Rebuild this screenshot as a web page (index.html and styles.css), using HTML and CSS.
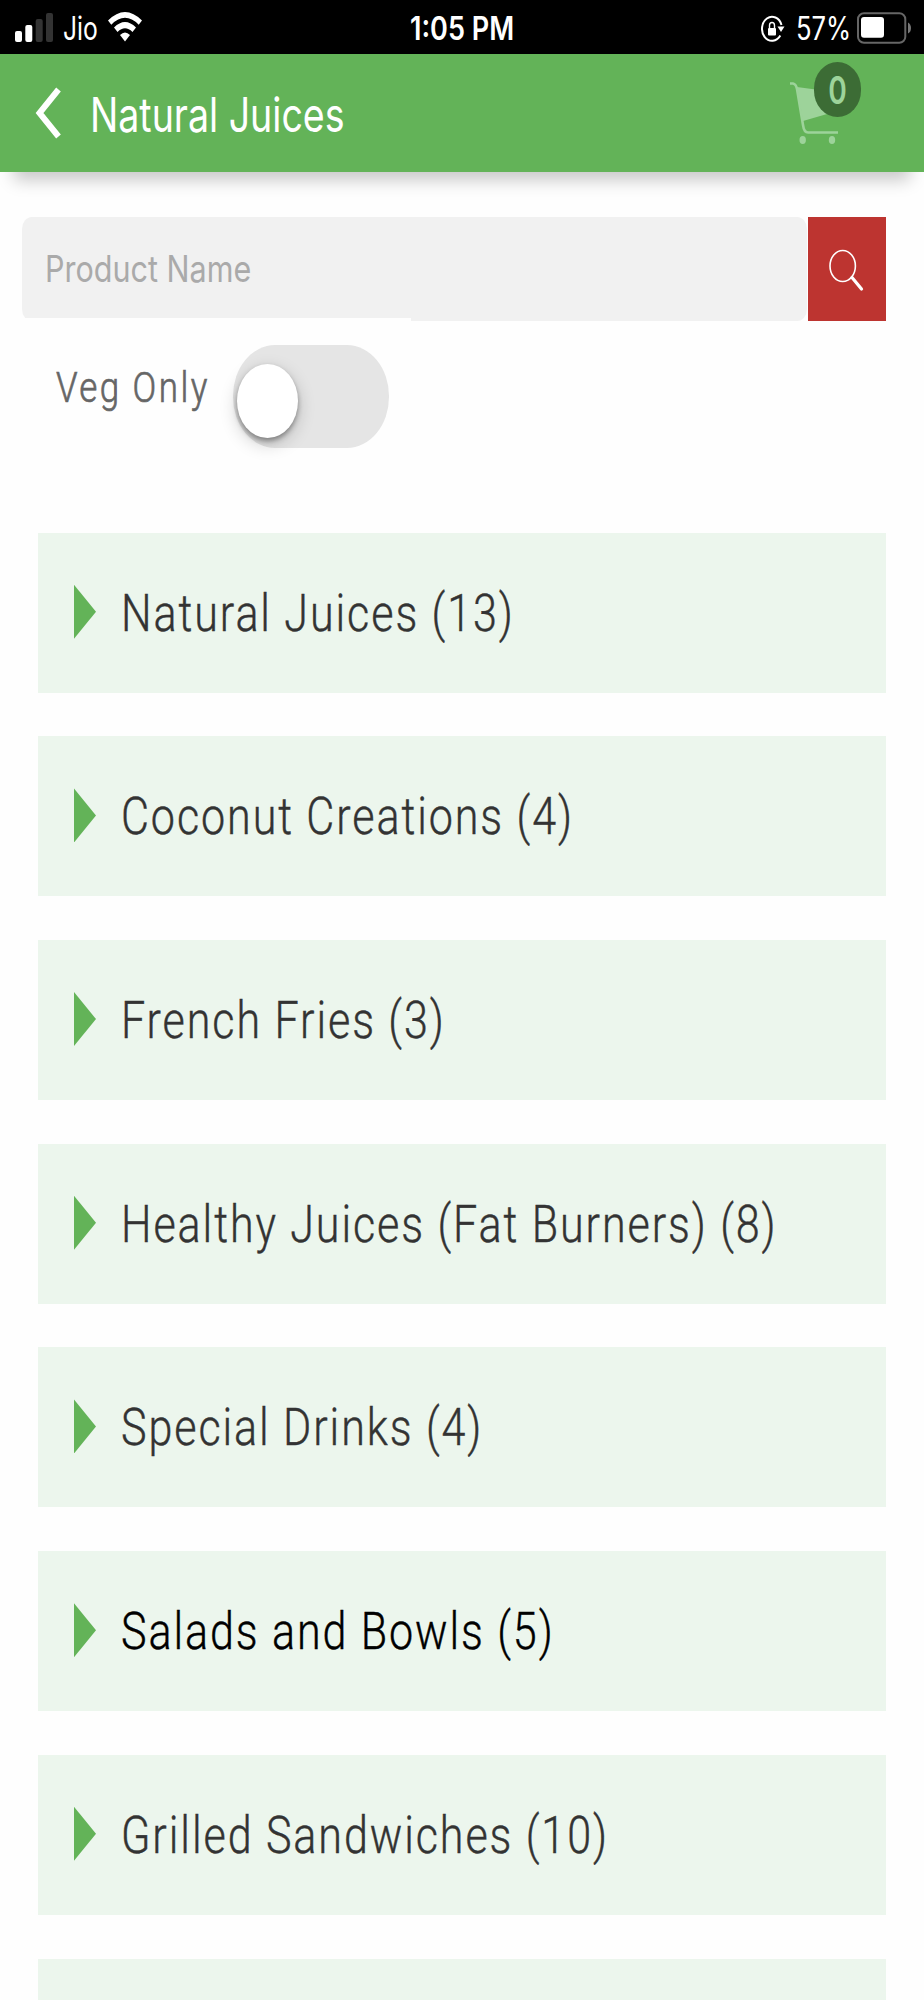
FILE: index.html
```
<!DOCTYPE html>
<html lang="en">
<head>
	<meta charset="UTF-8">
	<title>Natural Juices</title>
	<link rel="stylesheet" href="styles.css">
</head>
<body>
	<div class="status">
		<svg class="signal" width="40" height="30" viewBox="0 0 40 30">
			<rect x="0" y="19" width="7" height="11" rx="2" fill="#fff"/>
			<rect x="10.3" y="13" width="7" height="17" rx="2" fill="#fff"/>
			<rect x="20.7" y="7" width="7" height="23" rx="2" fill="#333"/>
			<rect x="31" y="1" width="7" height="29" rx="2" fill="#333"/>
		</svg>
		<span class="carrier"><b>Jio</b></span>
		<svg class="wifi" width="34" height="30" viewBox="0 0 34 30">
			<path d="M0 8.5Q17-8.5 34 8.5L30.7 12.7Q17-1 3.3 12.7Z" fill="#fff"/>
			<path d="M6 15.5Q17 4.5 28 15.5L24.5 20Q17 12.5 9.5 20Z" fill="#fff"/>
			<path d="M12 23Q17 18 22 23L17 29.5Z" fill="#fff"/>
		</svg>
		<span class="time"><b>1:05 PM</b></span>
		<svg class="lock" width="24" height="28" viewBox="0 0 24 28">
			<path d="M20.5 10A10 12 0 1 0 19.3 20.5" fill="none" stroke="#fff" stroke-width="2"/>
			<path d="M16.5 11.5h7l-3.5 5.5z" fill="#fff"/>
			<rect x="7" y="13" width="8" height="7.5" rx="1" fill="#fff"/>
			<path d="M8.5 13v-2.5a2.5 3 0 0 1 5 0V13" fill="none" stroke="#fff" stroke-width="1.4"/>
		</svg>
		<span class="percent"><b>57%</b></span>
		<svg class="battery" width="55" height="32" viewBox="0 0 55 32">
			<rect x="1" y="1.3" width="47.3" height="29.4" rx="6" fill="none" stroke="#666" stroke-width="2"/>
			<rect x="4" y="5" width="23" height="20.7" rx="3" fill="#fff"/>
			<path d="M51 10.5Q54 12 54 16T51 21.5Z" fill="#777"/>
		</svg>
	</div>
	<div class="header">
		<svg class="back" width="26" height="52" viewBox="0 0 26 52">
			<path d="M23.5 2.5L4.500 26L23.5 49.5" fill="none" stroke="#fff" stroke-width="6"/>
		</svg>
		<h1 class="title"><b>Natural Juices</b></h1>
		<div class="cart">
			<svg width="50" height="64" viewBox="0 0 50 64">
				<path d="M0 1.5H3Q6 2 7 7L13 43Q14 50.5 18 50.5H48" fill="none" stroke="#9dd39a" stroke-width="2.6"/>
				<path d="M7 5L44 10V30L13 39Z" fill="#9dd39a"/>
				<ellipse cx="12.7" cy="58" rx="3.2" ry="4" fill="#9dd39a"/>
				<ellipse cx="42" cy="58" rx="3.2" ry="4" fill="#9dd39a"/>
			</svg>
			<span class="count"><b>0</b></span>
		</div>
	</div>
	<div class="search">
		<div class="field"><b>Product Name</b></div>
		<div class="btn">
			<svg width="36" height="44" viewBox="0 0 36 44">
				<ellipse cx="14.7" cy="17" rx="12.7" ry="15.5" fill="none" stroke="#fff" stroke-width="1.6"/>
				<path d="M24 28.5L33.5 40" stroke="#fff" stroke-width="3.2" stroke-linecap="round"/>
			</svg>
		</div>
	</div>
	<div class="veg">
		<span class="label"><b>Veg Only</b></span>
		<div class="toggle"><span class="knob"></span></div>
	</div>
	<ul class="list">
		<li><i></i><b>Natural Juices (13)</b></li>
		<li><i></i><b>Coconut Creations (4)</b></li>
		<li><i></i><b>French Fries (3)</b></li>
		<li><i></i><b>Healthy Juices (Fat Burners) (8)</b></li>
		<li><i></i><b>Special Drinks (4)</b></li>
		<li class="active"><i></i><b>Salads and Bowls (5)</b></li>
		<li><i></i><b>Grilled Sandwiches (10)</b></li>
		<li class="cut"></li>
	</ul>
</body>
</html>
```
FILE: styles.css
```
*{
	margin: 0;
	padding: 0;
	box-sizing: border-box;
}
body{
	width: 924px;
	height: 2000px;
	overflow: hidden;
	background: #fefefe;
	font-family: Roboto, "Liberation Sans", sans-serif;
}
/* narrow text */
b{
	display: inline-block;
	font-weight: inherit;
	white-space: nowrap;
	transform: scaleX(.82);
	transform-origin: 0 50%;
}
svg{
	display: block;
	flex: none;
}
.status{
	display: flex;
	height: 54px;
	padding: 12px 0 0 15px;
	background: #000;
	color: #fff;
	font: 32px/34px Inter, sans-serif;
}
.carrier{
	width: 45px;
	margin-left: 8px;
}
.carrier b{
	transform: scaleX(.77);
}
.time{
	width: 104px;
	margin-left: 268px;
	font-weight: 600;
}
.time b{
	transform: scaleX(.845);
}
.lock{
	margin: 3px 0 0 247px;
}
.percent{
	width: 61px;
	margin-left: 11px;
}
.percent b{
	transform: scaleX(.8);
}
.header{
	display: flex;
	position: relative;
	height: 118px;
	padding-left: 35px;
	background: #63b358;
	color: #fff;
	box-shadow: 0 22px 16px -14px rgba(0,0,0,.22);
}
.back{
	margin-top: 33px;
}
.title{
	width: 300px;
	height: 60px;
	margin: 31px 0 0 29px;
	font: 48px/60px Inter, sans-serif;
}
.title b{
	transform: scaleX(.782);
}
.cart{
	position: relative;
	margin: 28px 0 0 400px;
}
.count{
	position: absolute;
	left: 24px;
	top: -20px;
	width: 47px;
	height: 55px;
	border-radius: 24px / 27px;
	background: #3c6c35;
	color: #9dd39a;
	font: 600 38px/56px Inter, sans-serif;
	text-align: center;
}
.count b{
	transform: scaleX(.74);
	transform-origin: 50% 50%;
}
.search{
	display: flex;
	gap: 1px;
	margin: 45px 0 0 22px;
}
.field{
	width: 785px;
	height: 104px;
	padding-left: 23px;
	border-radius: 10px / 12px;
	background: linear-gradient(#fefefe, #fefefe) 0 100% / 389px 3px no-repeat #f1f1f1;
	color: #aaa;
	font: 36.7px/104px Inter, sans-serif;
}
.field b{
	transform: scaleX(.832);
}
.btn{
	width: 78px;
	height: 104px;
	padding: 32px 0 0 20px;
	background: #bd3430;
}
.veg{
	display: flex;
	margin: 24px 0 0 56px;
}
.label{
	width: 177px;
	height: 60px;
	margin-top: 12px;
	color: #666;
	font-weight: 300;
	font-size: 42.6px;
	line-height: 60px;
	letter-spacing: 3px;
	-webkit-text-stroke: .7px #666;
}
.toggle{
	width: 156px;
	height: 103px;
	padding: 19px 0 0 4px;
	border-radius: 42px / 51px;
	background: #e5e5e5;
}
.knob{
	display: block;
	width: 61px;
	height: 74px;
	border-radius: 50%;
	background: #fff;
	box-shadow: 0 3px 5px rgba(0,0,0,.35), 0 6px 18px rgba(0,0,0,.2);
}
.list{
	display: grid;
	grid-template-columns: minmax(0, 1fr);
	gap: 43.7px;
	width: 848px;
	margin: 84.7px 0 0 38px;
	list-style: none;
}
.list li{
	display: flex;
	align-items: center;
	height: 160px;
	padding-left: 36px;
	background: #ecf6ed;
	color: #333;
	font-weight: 300;
	font-size: 52.5px;
	letter-spacing: 2.33px;
	-webkit-text-stroke: .4px;
}
.list .active{
	color: #000;
}
.list .cut{
	height: 41px;
}
.list i{
	flex: none;
	width: 22px;
	height: 54px;
	margin: -2px 25px 0 0;
	background: #63b358;
	clip-path: polygon(0 0, 100% 50%, 0 100%);
}
```
